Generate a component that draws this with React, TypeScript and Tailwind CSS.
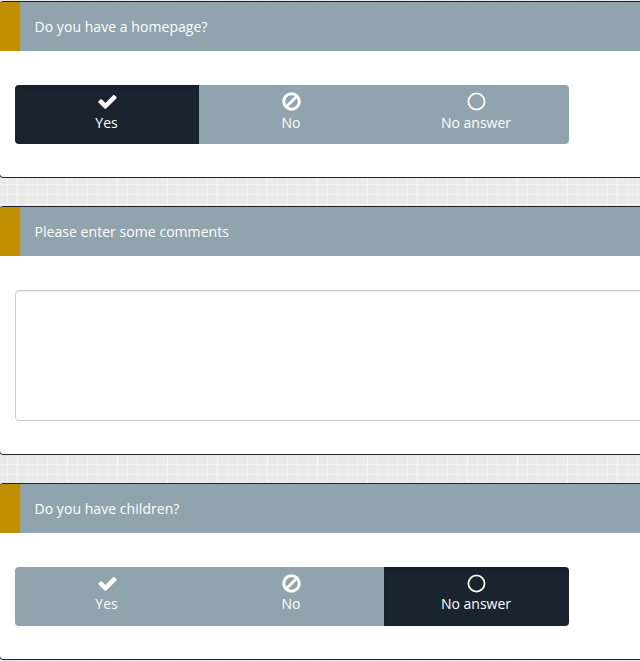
import { ReactNode } from "react";

import clsx from "clsx";

type Answer = "yes" | "no" | "none";

const CheckIcon = () => (
  <svg viewBox="0 0 1792 1792" className="h-[21px] w-[21px]" fill="currentColor">
    <path d="M1671 566q0 40-28 68l-724 724-136 136q-28 28-68 28t-68-28l-136-136-362-362q-28-28-28-68t28-68l136-136q28-28 68-28t68 28l294 295 656-657q28-28 68-28t68 28l136 136q28 28 28 68z" />
  </svg>
);

const BanIcon = () => (
  <svg viewBox="0 0 1792 1792" className="h-[21px] w-[21px]" fill="currentColor" stroke="currentColor" strokeWidth="30">
    <path d="M1440 893q0-161-87-295l-754 753q137 89 297 89 111 0 211.5-43.5t173.5-116.5 116-174.5 43-212.5zm-999 299l755-754q-135-91-300-91-148 0-273 73t-198 199-73 274q0 162 89 299zm1223-299q0 157-61 300t-163.5 246-245 164-298.5 61-298.5-61-245-164-163.5-246-61-300 61-299.5 163.5-245.5 245-164 298.5-61 298.5 61 245 164 163.5 245.5 61 299.5z" />
  </svg>
);

const CircleIcon = () => (
  <svg viewBox="0 0 1792 1792" className="h-[21px] w-[21px]" fill="none" stroke="currentColor">
    <circle cx="896" cy="896" r="690" strokeWidth="150" />
  </svg>
);

const options: { value: Answer; label: string; icon: ReactNode }[] = [
  { value: "yes", label: "Yes", icon: <CheckIcon /> },
  { value: "no", label: "No", icon: <BanIcon /> },
  { value: "none", label: "No answer", icon: <CircleIcon /> },
];

const Question = ({ title, children }: { title: string; children: ReactNode }) => (
  <section className="-ml-px w-[680px] overflow-hidden rounded-[4px] border border-[#1a242f] bg-white">
    <h2 className="h-[49px] border-l-20 border-[#c08f00] bg-[#90a4ad] pl-[14.5px] leading-[49px] tracking-[0.05px] text-white">
      {title}
    </h2>
    <div className="px-[15px] pt-[34px] pb-[33px]">{children}</div>
  </section>
);

const YesNo = ({ selected, labelClass }: { selected: Answer; labelClass?: string }) => (
  <div className="grid h-[59px] w-[554px] grid-cols-[184px_185px_185px] overflow-hidden rounded-[4px]">
    {options.map((option) => (
      <button
        key={option.value}
        className={clsx(
          "flex flex-col items-center pt-[6px] text-white",
          option.value === selected
            ? "bg-[#1a242f] shadow-[inset_0_3px_5px_rgba(0,0,0,0.125)]"
            : "bg-[#90a4ad]"
        )}
      >
        {option.icon}
        <span className={clsx("-ml-px leading-5", labelClass)}>{option.label}</span>
      </button>
    ))}
  </div>
);

const App = () => {
  return (
    <div className="flex h-[661px] flex-col gap-7 overflow-hidden bg-[#e9e9e9] bg-[linear-gradient(90deg,#f6f6f6_1px,transparent_1px),linear-gradient(90deg,#f1f1f1_1px,transparent_1px),linear-gradient(#f2f2f2_1px,transparent_1px)] bg-[size:50px_50px,10px_10px,10px_10px] bg-[position:17px_4px,7px_4px,0_4px] pt-px font-['Open_Sans',sans-serif] text-sm">
      <Question title="Do you have a homepage?">
        <YesNo selected="yes" labelClass="mt-px" />
      </Question>
      <Question title="Please enter some comments">
        <textarea
          className="block h-[131px] w-full resize-none rounded-[4px] border border-[#ccc] bg-white shadow-[inset_0_1px_1px_rgba(0,0,0,0.075)]"
          aria-label="Please enter some comments"
        />
      </Question>
      <Question title="Do you have children?">
        <YesNo selected="none" />
      </Question>
    </div>
  );
};

export default App;
